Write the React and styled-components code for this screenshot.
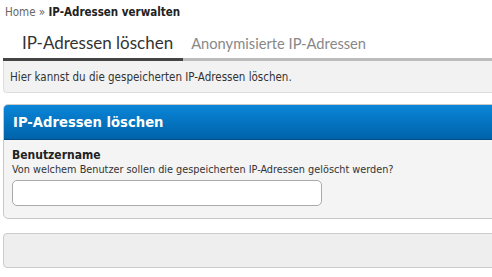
import React from 'react';
import styled, { createGlobalStyle } from 'styled-components';

const GlobalStyle = createGlobalStyle`
  html, body {
    margin: 0;
    padding: 0;
    background: #fff;
    overflow: hidden;
  }
  body {
    font-family: "DejaVu Sans Condensed", "DejaVu Sans", sans-serif;
    color: #333;
  }
`;

const Page = styled.div`
  width: 520px;
  padding: 5px 0 0 3px;
`;

const Breadcrumb = styled.div`
  padding-left: 2px;
  font-size: 11.5px;
  line-height: 14px;
  color: #666;
  b {
    color: #222;
    font-weight: bold;
    font-size: 11.5px;
  }
`;

const TabBar = styled.div`
  display: flex;
  align-items: flex-end;
  margin-top: 13px;
  border-bottom: 3px solid #bbb;
`;

const Tab = styled.div`
  padding: 0 10px 4px ${p => (p.active ? '19px' : '8px')};
  margin-bottom: -3px;
  font-family: Lato, "Open Sans", sans-serif;
  font-size: ${p => (p.active ? '17px' : '14.7px')};
  line-height: 22px;
  color: ${p => (p.active ? '#333' : '#888')};
  border-bottom: 3px solid ${p => (p.active ? '#444' : 'transparent')};
`;

const Info = styled.div`
  background: #f2f2f2;
  border: 1px solid #ddd;
  border-top: none;
  border-radius: 0 0 4px 4px;
  padding: 9px 6px 8px;
  font-size: 11.5px;
  line-height: 14px;
  color: #333;
`;

const Panel = styled.div`
  margin-top: 11px;
  border: 1px solid #c8c8c8;
  border-radius: 5px;
  background: #f4f4f4;
  overflow: hidden;
`;

const PanelHead = styled.div`
  height: 34px;
  display: flex;
  align-items: center;
  padding-left: 9px;
  background: linear-gradient(to bottom, #0a86d8, #0063aa);
  border-bottom: 1px solid #004e88;
  color: #fff;
  font-family: "DejaVu Sans", sans-serif;
  font-weight: bold;
  font-size: 13.2px;
`;

const PanelBody = styled.div`
  padding: 8px 8px 12px;
`;

const Label = styled.div`
  font-weight: bold;
  font-size: 12px;
  line-height: 15px;
  color: #222;
`;

const Hint = styled.div`
  font-size: 10.8px;
  line-height: 14px;
  color: #333;
`;

const Input = styled.input`
  display: block;
  box-sizing: border-box;
  margin-top: 3px;
  width: 310px;
  height: 26px;
  border: 1px solid #aaa;
  border-radius: 5px;
  background: #fff;
  outline: none;
`;

const Footer = styled.div`
  margin-top: 14px;
  height: 33px;
  border: 1px solid #ccc;
  border-radius: 4px;
  background: #eee;
`;

export default function App() {
  return (
    <>
      <GlobalStyle />
      <Page>
        <Breadcrumb>
          Home » <b>IP-Adressen verwalten</b>
        </Breadcrumb>
        <TabBar>
          <Tab active>IP-Adressen löschen</Tab>
          <Tab>Anonymisierte IP-Adressen</Tab>
        </TabBar>
        <Info>Hier kannst du die gespeicherten IP-Adressen löschen.</Info>
        <Panel>
          <PanelHead>IP-Adressen löschen</PanelHead>
          <PanelBody>
            <Label>Benutzername</Label>
            <Hint>Von welchem Benutzer sollen die gespeicherten IP-Adressen gelöscht werden?</Hint>
            <Input type="text" />
          </PanelBody>
        </Panel>
        <Footer />
      </Page>
    </>
  );
}
